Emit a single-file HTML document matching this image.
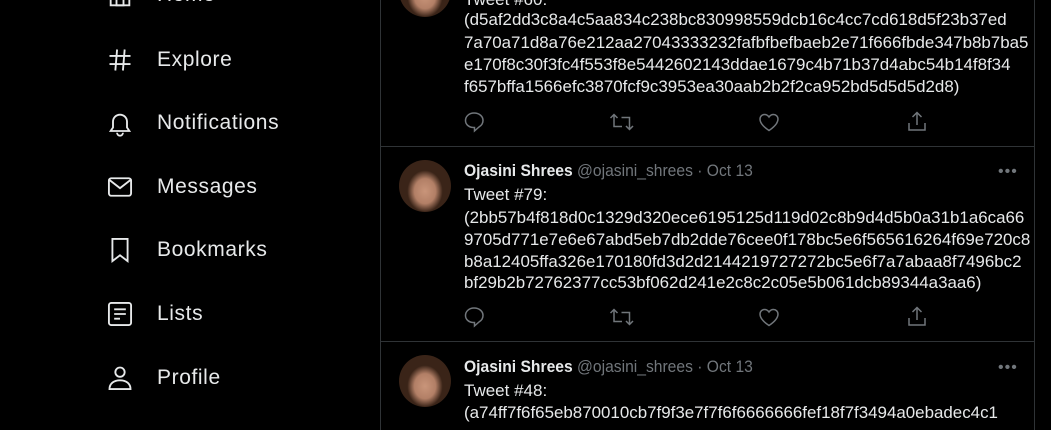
<!DOCTYPE html>
<html><head><meta charset="utf-8"><style>
*{margin:0;padding:0;box-sizing:border-box}
body{width:1051px;height:420px;background:#000;overflow:hidden;position:relative;font-family:"Liberation Sans",sans-serif;color:#e7e9ea}
.nav{position:absolute;left:157px;font-size:21px;line-height:26px;letter-spacing:.6px;color:#e7e9ea}
.ni{position:absolute;left:106px;width:28px;height:28px}
.col{position:absolute;left:380px;top:-10px;width:655px;height:440px;border-left:1px solid #2f3336;border-right:1px solid #2f3336}
.hr{position:absolute;left:380px;width:655px;height:1px;background:#2f3336}
.t{position:absolute;left:464px;white-space:nowrap;font-size:17px;line-height:22px;transform-origin:left center}
.hx{transform:scaleX(.995)}
.nm{transform:scaleX(.92)}
.g{color:#71767b;font-weight:normal}
.av{position:absolute;left:399px;width:52px;height:52px;border-radius:50%;overflow:hidden;background:radial-gradient(ellipse 34% 40% at 50% 60%,#c9957a 0,#b27f66 60%,#3a2418 100%),#1a120c}
.ic{position:absolute;width:20px;height:20px}
.dots{position:absolute;left:998px;color:#71767b;font-size:16px;letter-spacing:1px}
</style></head><body>

<svg class="ni" style="top:-18px" viewBox="0 0 24 24" fill="none" stroke="#e7e9ea" stroke-width="1.6"><path d="M4 9l8-6 8 6v11H4z"/><rect x="9" y="13" width="6" height="7"/></svg>
<div class="nav" style="top:-18px">Home</div>

<svg class="ni" style="top:46px" viewBox="0 0 24 24" fill="none" stroke="#e7e9ea" stroke-width="1.6"><path d="M3 8.5h18M3 15.5h18M9.5 3l-1.5 18M16 3l-1.5 18"/></svg>
<div class="nav" style="top:47px">Explore</div>

<svg class="ni" style="top:110px" viewBox="0 0 24 24" fill="none" stroke="#e7e9ea" stroke-width="1.6"><path d="M4 18h16l-2-3V10a6 6 0 0 0-12 0v5z"/><path d="M9.5 19.5a2.5 2.5 0 0 0 5 0"/></svg>
<div class="nav" style="top:110px">Notifications</div>

<svg class="ni" style="top:173px" viewBox="0 0 24 24" fill="none" stroke="#e7e9ea" stroke-width="1.6"><rect x="2.5" y="4.5" width="19" height="15" rx="2"/><path d="M3 6l9 7 9-7"/></svg>
<div class="nav" style="top:174px">Messages</div>

<svg class="ni" style="top:236px" viewBox="0 0 24 24" fill="none" stroke="#e7e9ea" stroke-width="1.6"><path d="M5.5 2.5h13v19L12 16.5 5.5 21.5z"/></svg>
<div class="nav" style="top:237px">Bookmarks</div>

<svg class="ni" style="top:300px" viewBox="0 0 24 24" fill="none" stroke="#e7e9ea" stroke-width="1.6"><rect x="2.5" y="2.5" width="19" height="19" rx="2"/><path d="M7 8h10M7 12h10M7 16h5"/></svg>
<div class="nav" style="top:301px">Lists</div>

<svg class="ni" style="top:364px" viewBox="0 0 24 24" fill="none" stroke="#e7e9ea" stroke-width="1.6"><circle cx="12" cy="7" r="4"/><path d="M3 21.5c0-5 4-7.5 9-7.5s9 2.5 9 7.5z"/></svg>
<div class="nav" style="top:365px">Profile</div>

<div class="col"></div>
<div class="hr" style="top:146px"></div>
<div class="hr" style="top:341px"></div>

<div class="av" style="top:-35px"></div>
<div class="t" style="top:-11px">Tweet #60:</div>
<div class="t hx" style="top:9px">(d5af2dd3c8a4c5aa834c238bc830998559dcb16c4cc7cd618d5f23b37ed</div>
<div class="t hx" style="top:32px">7a70a71d8a76e212aa27043333232fafbfbefbaeb2e71f666fbde347b8b7ba5</div>
<div class="t hx" style="top:54px">e170f8c30f3fc4f553f8e5442602143ddae1679c4b71b37d4abc54b14f8f34</div>
<div class="t hx" style="top:76px">f657bffa1566efc3870fcf9c3953ea30aab2b2f2ca952bd5d5d5d2d8)</div>

<div class="av" style="top:160px"></div>
<div class="t nm" style="top:160px"><b>Ojasini Shrees</b> <span class="g">@ojasini_shrees · Oct 13</span></div>
<div class="dots" style="top:163px">•••</div>
<div class="t" style="top:184px">Tweet #79:</div>
<div class="t hx" style="top:207px">(2bb57b4f818d0c1329d320ece6195125d119d02c8b9d4d5b0a31b1a6ca66</div>
<div class="t hx" style="top:229px">9705d771e7e6e67abd5eb7db2dde76cee0f178bc5e6f565616264f69e720c8</div>
<div class="t hx" style="top:251px">b8a12405ffa326e170180fd3d2d2144219727272bc5e6f7a7abaa8f7496bc2</div>
<div class="t hx" style="top:272px">bf29b2b72762377cc53bf062d241e2c8c2c05e5b061dcb89344a3aa6)</div>

<div class="av" style="top:355px"></div>
<div class="t nm" style="top:356px"><b>Ojasini Shrees</b> <span class="g">@ojasini_shrees · Oct 13</span></div>
<div class="dots" style="top:359px">•••</div>
<div class="t" style="top:380px">Tweet #48:</div>
<div class="t hx" style="top:402px">(a74ff7f6f65eb870010cb7f9f3e7f7f6f6666666fef18f7f3494a0ebadec4c1</div>

<svg style="position:absolute;left:0;top:0" width="1051" height="420" fill="none" stroke="#71767b" stroke-width="1.5">
<defs>
<g id="acts">
<path d="M474 308c-5 0-8.5 3.5-8.5 7.5 0 4 3.5 7 8 7h1v3.5l4.5-4c2.5-1.5 4-4 4-6.5 0-4-3.5-7.5-9-7.5z"/>
<path d="M610.5 313l3.5-3.5 3.5 3.5M614 309.5v12h8M633 321l-3.5 3.5-3.5-3.5M629.5 324.5v-12h-8"/>
<path d="M769 325.5c-3-2-9-6.5-9-11.5 0-2.5 2-4.5 4.5-4.5 2 0 3.5 1 4.5 2.5 1-1.5 2.5-2.5 4.5-2.5 2.5 0 4.5 2 4.5 4.5 0 5-6 9.5-9 11.5z"/>
<path d="M912.5 312l4.5-4.5 4.5 4.5M917 308v12M909 318v7h16v-7"/>
</g>
</defs>
<use href="#acts" transform="translate(0,-195)"/>
<use href="#acts"/>
</svg>
</body></html>
